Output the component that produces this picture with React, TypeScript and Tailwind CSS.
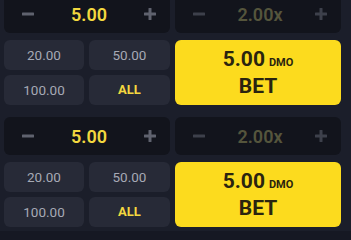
import React from "react";

function Minus({ dim }: { dim?: boolean }) {
  return (
    <svg width="12" height="4" viewBox="0 0 12 4">
      <rect x="0" y="0.5" width="12" height="3" rx="0.5" fill={dim ? "#3d404b" : "#5f626e"} />
    </svg>
  );
}

function Plus({ dim }: { dim?: boolean }) {
  const c = dim ? "#3d404b" : "#5f626e";
  return (
    <svg width="12" height="12" viewBox="0 0 12 12">
      <rect x="0" y="4.5" width="12" height="3" rx="0.5" fill={c} />
      <rect x="4.5" y="0" width="3" height="12" rx="0.5" fill={c} />
    </svg>
  );
}

function Stepper({ value, dim }: { value: string; dim?: boolean }) {
  return (
    <div className="flex h-[38px] items-center justify-between rounded-[6px] bg-[#12141c] pl-[18px] pr-[14px]">
      <Minus dim={dim} />
      <span
        className={
          dim
            ? "text-[18px] font-semibold text-[#55553c]"
            : "text-[18px] font-semibold text-[#f3d83f]"
        }
      >
        {value}
      </span>
      <Plus dim={dim} />
    </div>
  );
}

function Quick({ label, accent }: { label: string; accent?: boolean }) {
  return (
    <div
      className={
        accent
          ? "flex h-[30px] items-center justify-center rounded-[6px] bg-[#272a37] text-[13px] font-bold text-[#f3d83f]"
          : "flex h-[30px] items-center justify-center rounded-[6px] bg-[#272a37] text-[13.5px] text-[#a6a9b5]"
      }
    >
      {label}
    </div>
  );
}

function Panel() {
  return (
    <div className="grid grid-cols-[166px_166px] gap-x-[5px] gap-y-[7px]">
      <Stepper value="5.00" />
      <Stepper value="2.00x" dim />
      <div className="grid grid-cols-[80px_81px] gap-[5px]">
        <Quick label="20.00" />
        <Quick label="50.00" />
        <Quick label="100.00" />
        <Quick label="ALL" accent />
      </div>
      <div className="flex flex-col items-center justify-center rounded-[6px] bg-[#fcdb1e] text-[#2a240f]">
        <div className="flex items-baseline gap-[4px] leading-none">
          <span className="text-[21px] font-bold">5.00</span>
          <span className="text-[11px] font-bold">DMO</span>
        </div>
        <span className="mt-[6px] text-[21px] font-bold leading-none">BET</span>
      </div>
    </div>
  );
}

export default function App() {
  return (
    <div
      className="relative h-[240px] w-[351px] overflow-hidden bg-[#1b1e2a]"
      style={{ fontFamily: "Roboto, 'Liberation Sans', sans-serif" }}
    >
      <div className="mt-[-5px] flex flex-col gap-[12px] pl-[4px]">
        <Panel />
        <Panel />
      </div>
      <div className="mt-[4px] h-[10px] bg-[#161823]" />
    </div>
  );
}
